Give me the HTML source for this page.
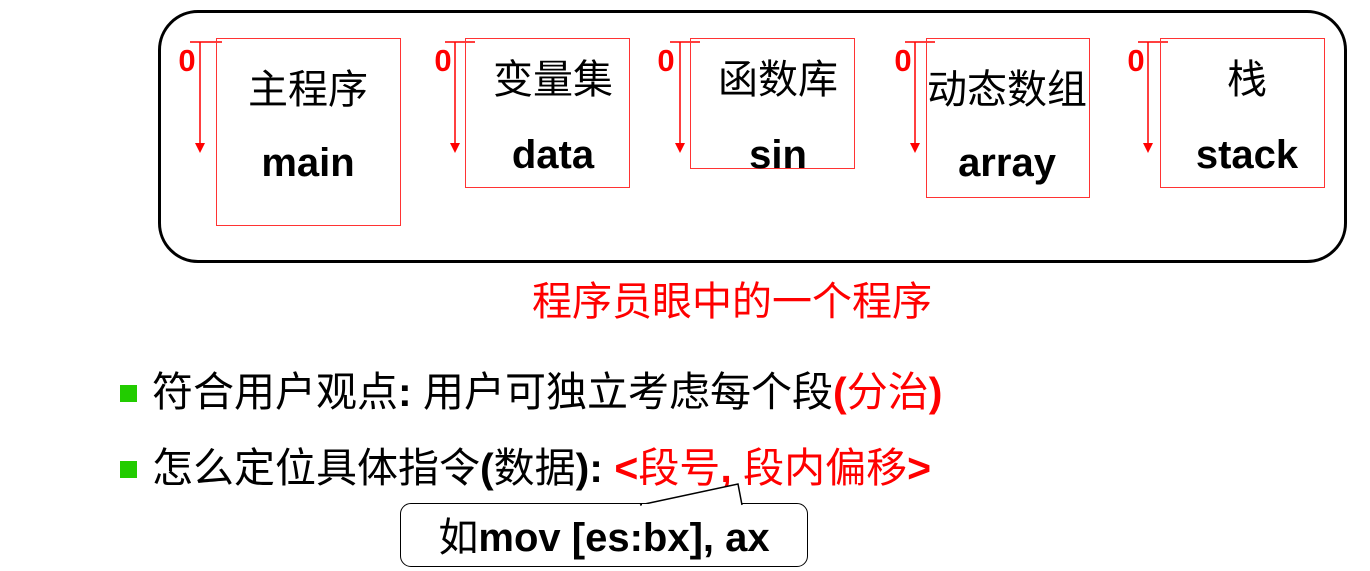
<html><head><style>
body{margin:0;width:1370px;height:571px;background:#fff;position:relative;overflow:hidden;font-family:"Liberation Sans","Noto Sans CJK SC",sans-serif}
.a{position:absolute;white-space:nowrap}
.box{position:absolute;border:1.5px solid #f33;box-sizing:border-box}
.cn{position:absolute;font-size:40px;line-height:40px;transform:translate(-50%,-50%);white-space:nowrap}
.en{position:absolute;font-size:40px;line-height:40px;font-weight:bold;transform:translate(-50%,-50%)}
.z{position:absolute;color:#f00;font-weight:bold;font-size:31px;transform:translate(-50%,-50%)}
.b{position:absolute;font-size:41px;line-height:41px;white-space:nowrap}
.r{color:#f00}
.sq{position:absolute;width:17px;height:17px;background:#22cc00}
</style></head><body>
<div class="a" style="left:158px;top:10px;width:1189px;height:253px;border:3px solid #000;border-radius:40px;box-sizing:border-box"></div>
<svg class="a" style="left:0;top:0" width="1370" height="571">
<g stroke="#f00" stroke-width="1.5" fill="#f00">
<line x1="190" y1="42" x2="222" y2="42"/><line x1="200" y1="42" x2="200" y2="145"/><polygon points="195,143 205,143 200,153" stroke="none"/>
<line x1="445" y1="42" x2="475" y2="42"/><line x1="455" y1="42" x2="455" y2="145"/><polygon points="450,143 460,143 455,153" stroke="none"/>
<line x1="670" y1="42" x2="700" y2="42"/><line x1="680" y1="42" x2="680" y2="145"/><polygon points="675,143 685,143 680,153" stroke="none"/>
<line x1="905" y1="42" x2="935" y2="42"/><line x1="915" y1="42" x2="915" y2="145"/><polygon points="910,143 920,143 915,153" stroke="none"/>
<line x1="1138" y1="42" x2="1168" y2="42"/><line x1="1148" y1="42" x2="1148" y2="145"/><polygon points="1143,143 1153,143 1148,153" stroke="none"/>
</g>
</svg>
<div class="box" style="left:216px;top:38px;width:185px;height:188px"></div>
<div class="box" style="left:465px;top:38px;width:165px;height:150px"></div>
<div class="box" style="left:690px;top:38px;width:165px;height:131px"></div>
<div class="box" style="left:926px;top:38px;width:164px;height:160px"></div>
<div class="box" style="left:1160px;top:38px;width:165px;height:150px"></div>
<div class="z" style="left:187px;top:61px">0</div>
<div class="z" style="left:443px;top:61px">0</div>
<div class="z" style="left:666px;top:61px">0</div>
<div class="z" style="left:903px;top:61px">0</div>
<div class="z" style="left:1136px;top:61px">0</div>
<div class="cn" style="left:308px;top:90px">主程序</div><div class="en" style="left:308px;top:163px">main</div>
<div class="cn" style="left:553px;top:80px">变量集</div><div class="en" style="left:553px;top:155px">data</div>
<div class="cn" style="left:778px;top:80px">函数库</div><div class="en" style="left:778px;top:155px">sin</div>
<div class="cn" style="left:1007px;top:90px">动态数组</div><div class="en" style="left:1007px;top:163px">array</div>
<div class="cn" style="left:1247px;top:80px">栈</div><div class="en" style="left:1247px;top:155px">stack</div>
<div class="cn r" style="left:732px;top:302px">程序员眼中的一个程序</div>
<div class="sq" style="left:120px;top:385px"></div>
<div class="b" style="left:152px;top:372px">符合用户观点<b>:</b> 用户可独立考虑每个段<b class="r">(</b><span class="r">分治</span><b class="r">)</b></div>
<div class="sq" style="left:120px;top:461px"></div>
<div class="b" style="left:152px;top:448px">怎么定位具体指令<b>(</b>数据<b>): </b><b class="r">&lt;</b><span class="r">段号</span><b class="r">, </b><span class="r">段内偏移</span><b class="r">&gt;</b></div>
<div class="a" style="left:400px;top:503px;width:408px;height:64px;border:1.5px solid #000;border-radius:11px;box-sizing:border-box"></div>
<svg class="a" style="left:0;top:0" width="1370" height="571"><polyline points="640,505 738,484 742,505" fill="#fff" stroke="#000" stroke-width="1.5"/><line x1="642" y1="505" x2="740" y2="505" stroke="#fff" stroke-width="2"/></svg>
<div class="cn" style="left:604px;top:538px">如<b>mov [es:bx], ax</b></div>
</body></html>
